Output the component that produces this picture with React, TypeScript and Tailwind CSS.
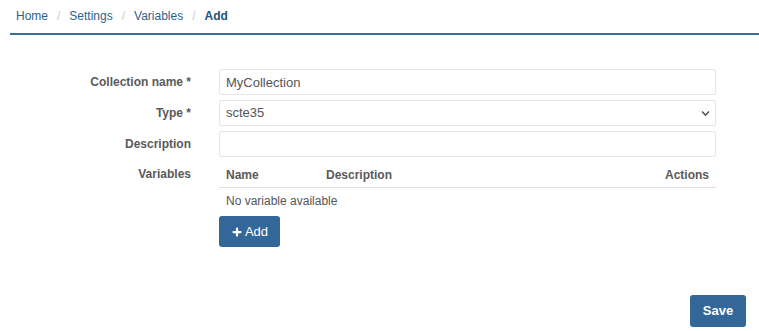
import { Plus } from 'lucide-react';

const font = { fontFamily: '"Liberation Sans", Arial, sans-serif' };

function Crumb({ label, last }: { label: string; last?: boolean }) {
  if (last) return <span className="font-bold text-[#23527c]">{label}</span>;
  return (
    <>
      <span className="text-[#2f5f8a]">{label}</span>
      <span className="px-[9px] text-[#cccccc]">/</span>
    </>
  );
}

export default function App() {
  return (
    <div className="w-[759px] h-[331px] bg-white text-[12px] text-[#555]" style={font}>
      <div className="pl-[10px]">
        <div className="flex items-center h-[35px] pl-[6px] pb-[2px] border-b-2 border-[#3b6e93]">
          <Crumb label="Home" />
          <Crumb label="Settings" />
          <Crumb label="Variables" />
          <Crumb label="Add" last />
        </div>
      </div>

      <div className="grid grid-cols-[191px_1fr] gap-x-[28px] gap-y-[5px] pr-[43px] pt-[34px] items-center">
        <label className="text-right font-bold text-[#5a5a5a]">Collection name *</label>
        <input
          readOnly
          value="MyCollection"
          className="h-[26px] px-[6px] border border-[#e6e6e6] rounded-[2px] text-[13px] text-[#555] outline-none"
        />

        <label className="text-right font-bold text-[#5a5a5a]">Type *</label>
        <div className="relative h-[26px] border border-[#e6e6e6] rounded-[2px] flex items-center pl-[6px] text-[13px] text-[#555]">
          scte35
          <svg className="absolute right-[5px] top-[9px]" width="9" height="7" viewBox="0 0 9 7">
            <path d="M1 1.5 L4.5 5 L8 1.5" fill="none" stroke="#555" strokeWidth="1.6" />
          </svg>
        </div>

        <label className="text-right font-bold text-[#5a5a5a]">Description</label>
        <input readOnly className="h-[26px] px-[6px] border border-[#e6e6e6] rounded-[2px] outline-none" />

        <label className="self-start pt-[3px] text-right font-bold text-[#5a5a5a]">Variables</label>
        <div>
          <div className="flex h-[26px] items-center px-[7px] border-b border-[#dedede] font-bold text-[#5a5a5a]">
            <span className="w-[100px]">Name</span>
            <span className="flex-1">Description</span>
            <span>Actions</span>
          </div>
          <div className="h-[26px] flex items-center px-[7px] text-[#555]">No variable available</div>
          <button className="mt-[2px] flex items-center justify-center gap-[2px] w-[61px] h-[31px] rounded-[3px] bg-[#336699] text-white text-[13px]">
            <Plus size={12} strokeWidth={4.5} />
            Add
          </button>
        </div>
      </div>

      <div className="flex justify-end pr-[13px] pt-[48px]">
        <button className="w-[56px] h-[32px] rounded-[3px] bg-[#336699] text-white font-bold text-[13px]">Save</button>
      </div>
    </div>
  );
}
